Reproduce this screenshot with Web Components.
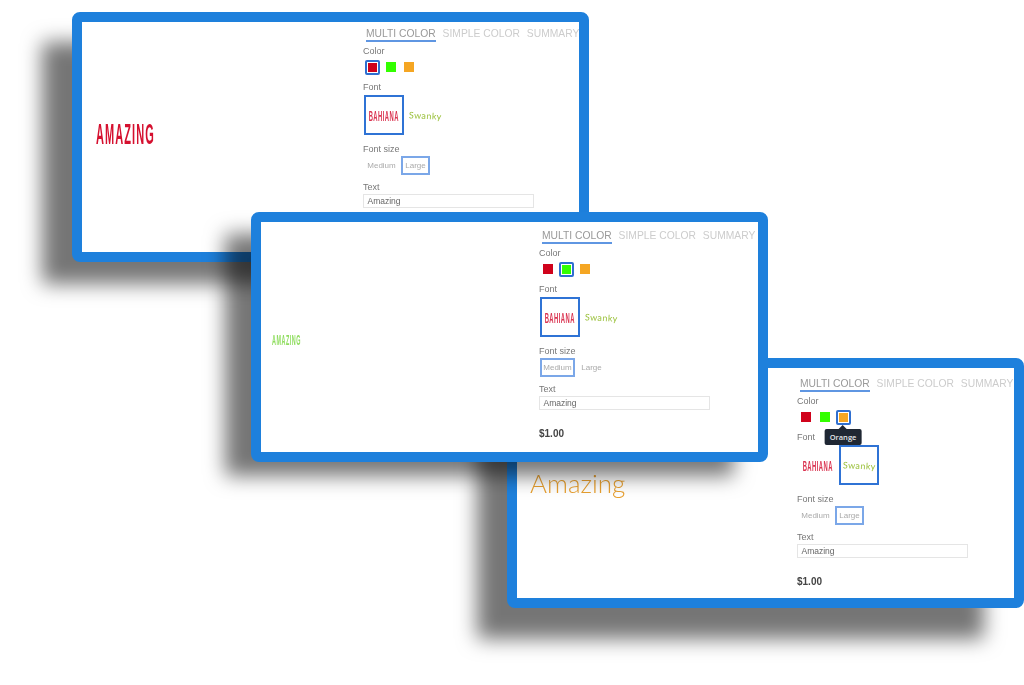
<!DOCTYPE html>
<html>
<head>
<meta charset="utf-8">
<title>Product designer</title>
<style>
    html, body { margin: 0; padding: 0; background: #fff; }
    body { width: 1024px; height: 685px; overflow: hidden; position: relative; font-family: "Liberation Sans", Arial, sans-serif; }
    product-window { position: absolute; }
</style>
</head>
<body>
    <product-window style="left:72px;top:12px;z-index:1;--shadow:-34px 26px 20px -4px rgba(0,0,0,.54);--pad-top:5px;--pad-left:281px;--hero-left:14px;--hero-top:-8px"
        color="0" font="0" size="1" hero="bahiana" hero-color="#d5102f" hero-width="59" hero-height="21"></product-window>
    <product-window style="left:507px;top:358px;z-index:2;--shadow:-35px 36px 20px -5px rgba(0,0,0,.54);--pad-top:9px;--pad-left:280px;--hero-left:13px;--hero-top:0px"
        color="2" font="1" size="1" hero="swanky" hero-color="#e8a030" tip="Orange"></product-window>
    <product-window style="left:251px;top:212px;z-index:3;--shadow:-30px 18px 20px -4px rgba(0,0,0,.54);--pad-top:7px;--pad-left:278px;--hero-left:11px;--hero-top:4px"
        color="1" font="0" size="0" hero="bahiana" hero-color="#8fdd5e" hero-width="29" hero-height="11"></product-window>

<script>
class OptionTabs extends HTMLElement {
    constructor() {
        super();
        this.attachShadow({ mode: 'open' });
    }

    connectedCallback() {
        this.shadowRoot.innerHTML = `
            <style>
                :host { display: flex; gap: 7px; margin-left: 3px; font-size: 10.3px; line-height: 12px; color: #ccc; white-space: nowrap; }
                span { padding-top: 1px; border-bottom: 2px solid transparent; }
                .on { color: #999; border-bottom-color: #5f96e2; }
            </style>
            <span class="on">MULTI COLOR</span>
            <span>SIMPLE COLOR</span>
            <span>SUMMARY</span>
        `;
    }
}

class ColorSwatch extends HTMLElement {
    constructor() {
        super();
        this.attachShadow({ mode: 'open' });
    }

    connectedCallback() {
        const tip = this.getAttribute('tip');
        this.shadowRoot.innerHTML = `
            <style>
                :host { display: block; position: relative; width: 15px; height: 15px; box-sizing: border-box; border: 2px solid transparent; border-radius: 2px; padding: .5px; }
                :host([selected]) { border-color: #2f6fd0; padding: 1px; }
                i { display: block; width: 10px; height: 10px; background: ${this.getAttribute('color')}; }
                :host([selected]) i { width: 9px; height: 9px; }
                .tip { position: absolute; left: 50%; top: 17px; transform: translateX(-50%); background: #1f2733; color: #e4e6e8; font-size: 7.5px; line-height: 16px; padding: 0 5px; border-radius: 2px; white-space: nowrap; font-family: "Open Sans", sans-serif; font-weight: 600; }
                .tip::before { content: ''; position: absolute; left: 50%; top: -4px; margin-left: -4px; border: 4px solid transparent; border-top: 0; border-bottom-color: #1f2733; }
            </style>
            <i></i>
            ${tip ? `<div class="tip">${tip}</div>` : ''}
        `;
    }
}

class FontSample extends HTMLElement {
    constructor() {
        super();
        this.attachShadow({ mode: 'open' });
    }

    connectedCallback() {
        const isSwanky = this.getAttribute('name') === 'swanky';
        this.shadowRoot.innerHTML = `
            <style>
                :host { display: flex; align-items: center; justify-content: center; width: 40px; height: 40px; box-sizing: border-box; border: 2px solid transparent; overflow: hidden; }
                :host([selected]) { border-color: #2f73d5; }
                .bahiana { font-size: 15px; font-weight: bold; letter-spacing: .08em; line-height: 15px; color: #da3350; transform: scaleX(.39); white-space: nowrap; }
                .swanky { font-family: "Lato", sans-serif; font-size: 9px; letter-spacing: .4px; color: #9bc13c; transform: rotate(3deg); white-space: nowrap; }
            </style>
            <span class="${isSwanky ? 'swanky' : 'bahiana'}">${isSwanky ? 'Swanky' : 'BAHIANA'}</span>
        `;
    }
}

class SizeChoice extends HTMLElement {
    constructor() {
        super();
        this.attachShadow({ mode: 'open' });
    }

    connectedCallback() {
        this.shadowRoot.innerHTML = `
            <style>
                :host { display: flex; align-items: center; justify-content: center; height: 19px; box-sizing: border-box; border: 2px solid transparent; font-size: 8px; color: #aaa; }
                :host([selected]) { border-color: #7ba7e8; }
            </style>
            <slot></slot>
        `;
    }
}

class ProductWindow extends HTMLElement {
    constructor() {
        super();
        this.attachShadow({ mode: 'open' });
    }

    connectedCallback() {
        const color = Number(this.getAttribute('color'));
        const font = Number(this.getAttribute('font'));
        const size = Number(this.getAttribute('size'));
        const tip = this.getAttribute('tip');
        const heroColor = this.getAttribute('hero-color');
        const colors = ['#d0021b', '#33ff00', '#f5a623'];

        const swatches = colors.map((c, i) => {
            const sel = i === color ? 'selected' : '';
            const tipAttr = i === color && tip ? `tip="${tip}"` : '';
            return `<color-swatch color="${c}" ${sel} ${tipAttr}></color-swatch>`;
        }).join('');

        // hero text: bahiana is squeezed to the measured box, swanky is a loose upright
        let hero;
        if (this.getAttribute('hero') === 'bahiana') {
            const h = Number(this.getAttribute('hero-height'));
            const w = Number(this.getAttribute('hero-width'));
            const fs = h / 0.716;
            const sx = w / (fs * 5.37);
            hero = `<div class="hero" style="font-size:${fs}px;font-weight:bold;letter-spacing:.1em;line-height:${h}px;color:${heroColor};transform:scaleX(${sx});transform-origin:left center;white-space:nowrap">AMAZING</div>`;
        } else {
            hero = `<div class="hero" style="font-family:'Lato',sans-serif;font-weight:300;font-size:26px;line-height:30px;color:${heroColor};white-space:nowrap">Amazing</div>`;
        }

        this.shadowRoot.innerHTML = `
            <style>
                :host { display: block; width: 517px; height: 250px; box-sizing: border-box; border: 10px solid #1e80dc; border-radius: 8px; background: #fff; box-shadow: var(--shadow); }
                .inner { display: flex; height: 100%; overflow: hidden; font-size: 9px; line-height: 11px; color: #777; filter: blur(.35px); }
                .stage { flex: none; box-sizing: border-box; width: var(--pad-left); padding-left: var(--hero-left); display: flex; flex-direction: column; justify-content: center; }
                .hero { margin-top: var(--hero-top); }
                .form { flex: none; width: 230px; padding-top: var(--pad-top); }
                .label { margin-top: 7px; }
                .first { margin-top: 3.5px; }
                .swatches { display: flex; gap: 3.5px; margin: 3px 0 0 1.5px; }
                .fonts { display: flex; gap: 1px; margin: 2.5px 0 0 1px; }
                .sizes { display: flex; gap: 2px; margin: 1.5px 0 0 1px; }
                .input { box-sizing: border-box; width: 171px; height: 14px; margin-top: 1px; padding-left: 3.5px; border: 1px solid #e5e5e5; font-size: 8.5px; line-height: 12px; color: #666; }
                .price { margin-top: 17.5px; font-size: 10px; line-height: 12px; font-weight: bold; color: #444; }
            </style>
            <div class="inner">
                <div class="stage">${hero}</div>
                <div class="form">
                    <option-tabs></option-tabs>
                    <div class="label first">Color</div>
                    <div class="swatches">${swatches}</div>
                    <div class="label">Font</div>
                    <div class="fonts">
                        <font-sample name="bahiana" ${font === 0 ? 'selected' : ''}></font-sample>
                        <font-sample name="swanky" ${font === 1 ? 'selected' : ''}></font-sample>
                    </div>
                    <div class="label" style="margin-top:8.5px">Font size</div>
                    <div class="sizes">
                        <size-choice style="width:35px" ${size === 0 ? 'selected' : ''}>Medium</size-choice>
                        <size-choice style="width:29px" ${size === 1 ? 'selected' : ''}>Large</size-choice>
                    </div>
                    <div class="label">Text</div>
                    <div class="input">Amazing</div>
                    <div class="price">$1.00</div>
                </div>
            </div>
        `;
    }
}

customElements.define('option-tabs', OptionTabs);
customElements.define('color-swatch', ColorSwatch);
customElements.define('font-sample', FontSample);
customElements.define('size-choice', SizeChoice);
customElements.define('product-window', ProductWindow);
</script>
</body>
</html>
